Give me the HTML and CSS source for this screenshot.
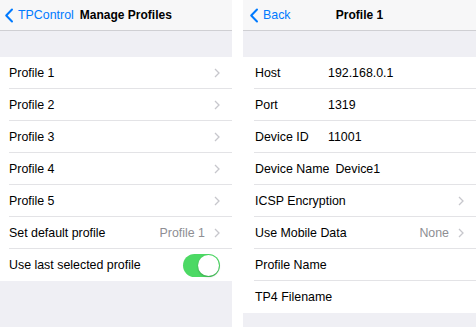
FILE: index.html
```html
<!DOCTYPE html>
<html lang="en">
<head>
    <meta charset="UTF-8" />
    <title>Profiles</title>
    <link rel="stylesheet" href="styles.css">
</head>
<body>

<div class="screens">

    <!-- Manage profiles -->
    <div class="screen screen-left">
        <div class="navbar">
            <div class="back">
                <svg class="back-icon" width="10" height="15" viewBox="0 0 10 15"><polyline points="8,1.5 2.2,7.5 8,13.5" /></svg>
                <span>TPControl</span>
            </div>
            <div class="nav-title nav-title-inline">Manage Profiles</div>
        </div>
        <div class="spacer"></div>
        <div class="list">
            <div class="row"><div class="row-body"><span class="label">Profile 1</span><span class="chevron"><svg width="6" height="10" viewBox="0 0 6 10"><polyline points="1,1 5,5 1,9" /></svg></span></div></div>
            <div class="row"><div class="row-body"><span class="label">Profile 2</span><span class="chevron"><svg width="6" height="10" viewBox="0 0 6 10"><polyline points="1,1 5,5 1,9" /></svg></span></div></div>
            <div class="row"><div class="row-body"><span class="label">Profile 3</span><span class="chevron"><svg width="6" height="10" viewBox="0 0 6 10"><polyline points="1,1 5,5 1,9" /></svg></span></div></div>
            <div class="row"><div class="row-body"><span class="label">Profile 4</span><span class="chevron"><svg width="6" height="10" viewBox="0 0 6 10"><polyline points="1,1 5,5 1,9" /></svg></span></div></div>
            <div class="row"><div class="row-body"><span class="label">Profile 5</span><span class="chevron"><svg width="6" height="10" viewBox="0 0 6 10"><polyline points="1,1 5,5 1,9" /></svg></span></div></div>
            <div class="row"><div class="row-body"><span class="label">Set default profile</span><span class="detail">Profile 1</span><span class="chevron"><svg width="6" height="10" viewBox="0 0 6 10"><polyline points="1,1 5,5 1,9" /></svg></span></div></div>
            <div class="row"><div class="row-body"><span class="label">Use last selected profile</span><span class="toggle on"><span class="knob"></span></span></div></div>
        </div>
    </div>

    <!-- Profile detail -->
    <div class="screen screen-right">
        <div class="navbar">
            <div class="back">
                <svg class="back-icon" width="10" height="15" viewBox="0 0 10 15"><polyline points="8,1.5 2.2,7.5 8,13.5" /></svg>
                <span>Back</span>
            </div>
            <div class="nav-title nav-title-center">Profile 1</div>
        </div>
        <div class="spacer"></div>
        <div class="list">
            <div class="row"><div class="row-body"><span class="field">Host</span><span class="value">192.168.0.1</span></div></div>
            <div class="row"><div class="row-body"><span class="field">Port</span><span class="value">1319</span></div></div>
            <div class="row"><div class="row-body"><span class="field">Device ID</span><span class="value">11001</span></div></div>
            <div class="row"><div class="row-body"><span class="field">Device Name</span><span class="value">Device1</span></div></div>
            <div class="row"><div class="row-body"><span class="label">ICSP Encryption</span><span class="chevron"><svg width="6" height="10" viewBox="0 0 6 10"><polyline points="1,1 5,5 1,9" /></svg></span></div></div>
            <div class="row"><div class="row-body"><span class="label">Use Mobile Data</span><span class="detail">None</span><span class="chevron"><svg width="6" height="10" viewBox="0 0 6 10"><polyline points="1,1 5,5 1,9" /></svg></span></div></div>
            <div class="row"><div class="row-body"><span class="field">Profile Name</span></div></div>
            <div class="row"><div class="row-body"><span class="field">TP4 Filename</span></div></div>
        </div>
    </div>

</div>

</body>
</html>
```

FILE: styles.css
```css
body {
    margin: 0;
    background: #ffffff;
    font-family: "Liberation Sans", Arial, sans-serif;
    font-size: 12.4px;
    color: #000000;
}

.screens {
    display: flex;
    gap: 11px;
    height: 327px;
}

.screen {
    display: flex;
    flex-direction: column;
    background: #efeff4;
}

.screen-left {
    width: 232px;
}

.screen-right {
    width: 233px;
}

/* Navigation bar */
.navbar {
    position: relative;
    height: 30px;
    display: flex;
    align-items: center;
    background: #f7f7f8;
    border-bottom: 1px solid #cfcfd3;
}

.back {
    display: flex;
    align-items: center;
    color: #007aff;
    padding-left: 4px;
}

.screen-right .back {
    padding-left: 6px;
}

.back-icon {
    margin-right: 4px;
}

.back-icon polyline {
    fill: none;
    stroke: #007aff;
    stroke-width: 2;
    stroke-linecap: round;
    stroke-linejoin: round;
}

.nav-title {
    font-weight: bold;
    font-size: 12px;
}

.nav-title-inline {
    margin-left: 6px;
}

/* title centred over the whole bar */
.nav-title-center {
    position: absolute;
    left: 0;
    right: 0;
    text-align: center;
}

.spacer {
    height: 26px;
}

/* Table */
.list {
    background: #ffffff;
}

.row {
    height: 32px;
    padding-left: 9px;
}

.screen-right .row {
    padding-left: 11px;
}

.row-body {
    height: 31px;
    display: flex;
    align-items: center;
    padding-right: 12px;
    border-bottom: 1px solid #e3e3e6;
}

.screen-right .row-body {
    padding-left: 1px;
}

.row:last-child .row-body {
    border-bottom: none;
    height: 32px;
}

.label {
    flex: 1;
}

.detail {
    color: #8e8e93;
    margin-right: 9px;
}

.chevron {
    display: flex;
}

.chevron polyline {
    fill: none;
    stroke: #c7c7cc;
    stroke-width: 1.3;
}

.field {
    min-width: 67px;
    margin-right: 6px;
}

.value {
    flex: 1;
}

/* Switch */
.toggle {
    position: relative;
    width: 37px;
    height: 23px;
    border-radius: 12px;
    background: #4cd964;
    margin-right: 0;
}

.knob {
    position: absolute;
    top: 1px;
    right: 1px;
    width: 21px;
    height: 21px;
    border-radius: 50%;
    background: #ffffff;
    box-shadow: 0 1px 2px rgba(0, 0, 0, 0.25);
}
```
